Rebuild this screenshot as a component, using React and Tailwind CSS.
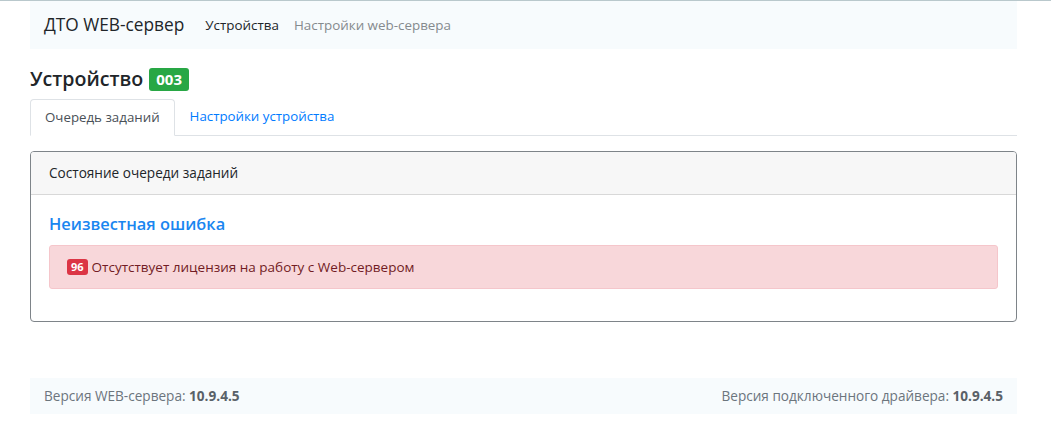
export default function App() {
  const font = { fontFamily: '"Open Sans", "Noto Sans", "Liberation Sans", sans-serif' };
  return (
    <div className="min-h-[433px] bg-white border-t border-[#b9c8cc] text-[#212529]" style={font}>
      <div className="ml-[30px] w-[987px]">
        <nav className="h-[48px] bg-[#f7fbfd] flex items-center px-[14px]">
          <span className="text-[17.3px] text-[#212529] mr-[21px]">ДТО WEB-сервер</span>
          <span className="text-[13.4px] text-[#212529] mr-[15px]">Устройства</span>
          <span className="text-[13.4px] text-[#858a8e]">Настройки web-сервера</span>
        </nav>
        <div className="mt-[18px] flex items-center h-[24px]">
          <h4 className="text-[19.6px] font-semibold leading-none text-[#212529]">Устройство</h4>
          <span className="ml-[6px] bg-[#28a745] text-white text-[15px] font-bold rounded-[3px] px-[7px] h-[23px] flex items-center">003</span>
        </div>
        <div className="mt-[8px] flex border-b border-[#dee2e6] h-[37px]">
          <div className="h-[37px] px-[14px] flex items-center border border-[#dee2e6] border-b-white rounded-t-[4px] bg-white text-[13.3px] text-[#495057] -mb-px">Очередь заданий</div>
          <div className="h-[36px] px-[15px] flex items-center text-[13.3px] text-[#007bff]">Настройки устройства</div>
        </div>
        <div className="mt-[15px] border border-[#7e8489] rounded-[4px] overflow-hidden">
          <div className="h-[43px] bg-[#f7f7f7] border-b border-[#d8d8d8] flex items-center px-[18px] text-[13.6px] text-[#212529]">Состояние очереди заданий</div>
          <div className="px-[18px] pt-[17px] pb-[32px]">
            <h5 className="text-[16.4px] font-semibold text-[#1a86f0] leading-[24px] mb-[9px]">Неизвестная ошибка</h5>
            <div className="h-[44px] bg-[#f8d7da] border border-[#f5c6cb] rounded-[3px] flex items-center px-[17px] text-[13.5px] text-[#721c24]">
              <span className="bg-[#dc3545] text-white font-bold text-[11px] rounded-[3px] px-[4px] h-[16px] flex items-center mr-[4px]">96</span>
              Отсутствует лицензия на работу с Web-сервером
            </div>
          </div>
        </div>
        <footer className="mt-[56px] h-[36px] bg-[#f7fbfd] flex items-center justify-between px-[14px] text-[13.6px] text-[#6c757d]">
          <span>Версия WEB-сервера: <b className="font-bold text-[#5a6168]">10.9.4.5</b></span>
          <span>Версия подключенного драйвера: <b className="font-bold text-[#5a6168]">10.9.4.5</b></span>
        </footer>
      </div>
    </div>
  );
}
